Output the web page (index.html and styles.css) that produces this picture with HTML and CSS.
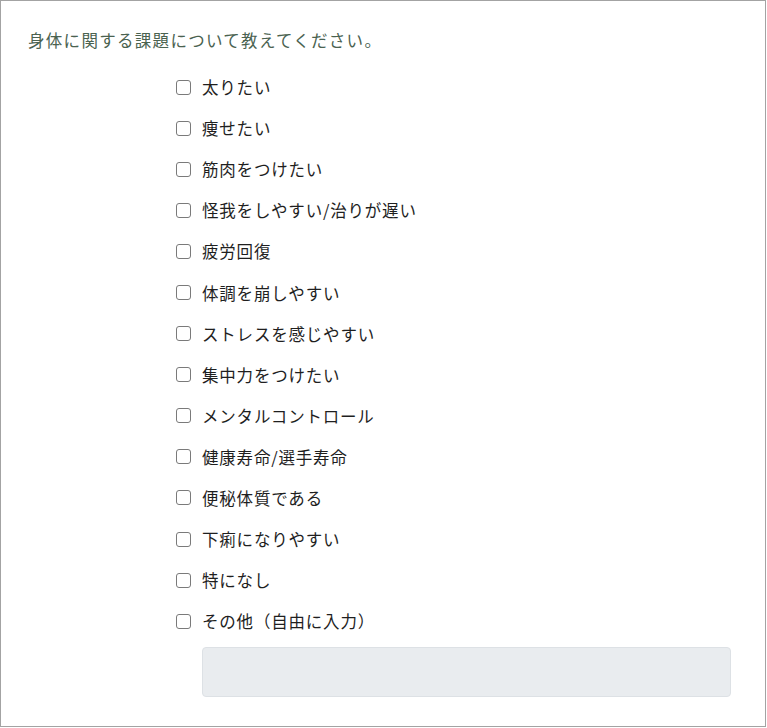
FILE: index.html
```html
<!DOCTYPE html>
<html lang="ja">
<head>
  <meta charset="UTF-8">
  <meta name="viewport" content="width=device-width, initial-scale=1.0">
  <title>身体に関する課題</title>
  <link rel="stylesheet" href="styles.css">
</head>
<body>
  <form id="survey-form">
    <div class="question">身体に関する課題について教えてください。</div>
    <div class="options">
      <label class="option"><input type="checkbox" name="issues" value="1"><span>太りたい</span></label>
      <label class="option"><input type="checkbox" name="issues" value="2"><span>痩せたい</span></label>
      <label class="option"><input type="checkbox" name="issues" value="3"><span>筋肉をつけたい</span></label>
      <label class="option"><input type="checkbox" name="issues" value="4"><span>怪我をしやすい/治りが遅い</span></label>
      <label class="option"><input type="checkbox" name="issues" value="5"><span>疲労回復</span></label>
      <label class="option"><input type="checkbox" name="issues" value="6"><span>体調を崩しやすい</span></label>
      <label class="option"><input type="checkbox" name="issues" value="7"><span>ストレスを感じやすい</span></label>
      <label class="option"><input type="checkbox" name="issues" value="8"><span>集中力をつけたい</span></label>
      <label class="option"><input type="checkbox" name="issues" value="9"><span>メンタルコントロール</span></label>
      <label class="option"><input type="checkbox" name="issues" value="10"><span>健康寿命/選手寿命</span></label>
      <label class="option"><input type="checkbox" name="issues" value="11"><span>便秘体質である</span></label>
      <label class="option"><input type="checkbox" name="issues" value="12"><span>下痢になりやすい</span></label>
      <label class="option"><input type="checkbox" name="issues" value="13"><span>特になし</span></label>
      <label class="option"><input type="checkbox" name="issues" value="14"><span>その他（自由に入力）</span></label>
      <textarea class="other-text" name="other" disabled></textarea>
    </div>
  </form>
</body>
</html>
```

FILE: styles.css
```css
body {
  margin: 0;
  background: #fff;
  font-family: "Noto Sans CJK JP", "Noto Sans", sans-serif;
}

#survey-form {
  width: 766px;
  height: 727px;
  box-sizing: border-box;
  border: 1px solid #a3a3a3;
  padding: 27px 28px 0 27px;
}

#survey-form .question {
  font-size: 16.5px;
  line-height: 24px;
  letter-spacing: 1.3px;
  color: #4a6250;
}

#survey-form .options {
  margin: 14.5px 0 0 148px;
  display: flex;
  flex-direction: column;
}

#survey-form .option {
  display: flex;
  align-items: center;
  height: 41.1px;
  font-size: 16.5px;
  letter-spacing: 0.8px;
  color: #1f1f1f;
  cursor: pointer;
}

#survey-form .option input {
  appearance: none;
  width: 15px;
  height: 15px;
  margin: 0 11px 0 0;
  border: 1.5px solid #7a7a7a;
  border-radius: 3px;
  background: #fff;
  box-sizing: border-box;
}

#survey-form .other-text {
  margin: 5px 0 0 26px;
  width: 529px;
  height: 50px;
  box-sizing: border-box;
  background: #e9ecef;
  border: 1px solid #dde1e5;
  border-radius: 4px;
  resize: none;
}
```
